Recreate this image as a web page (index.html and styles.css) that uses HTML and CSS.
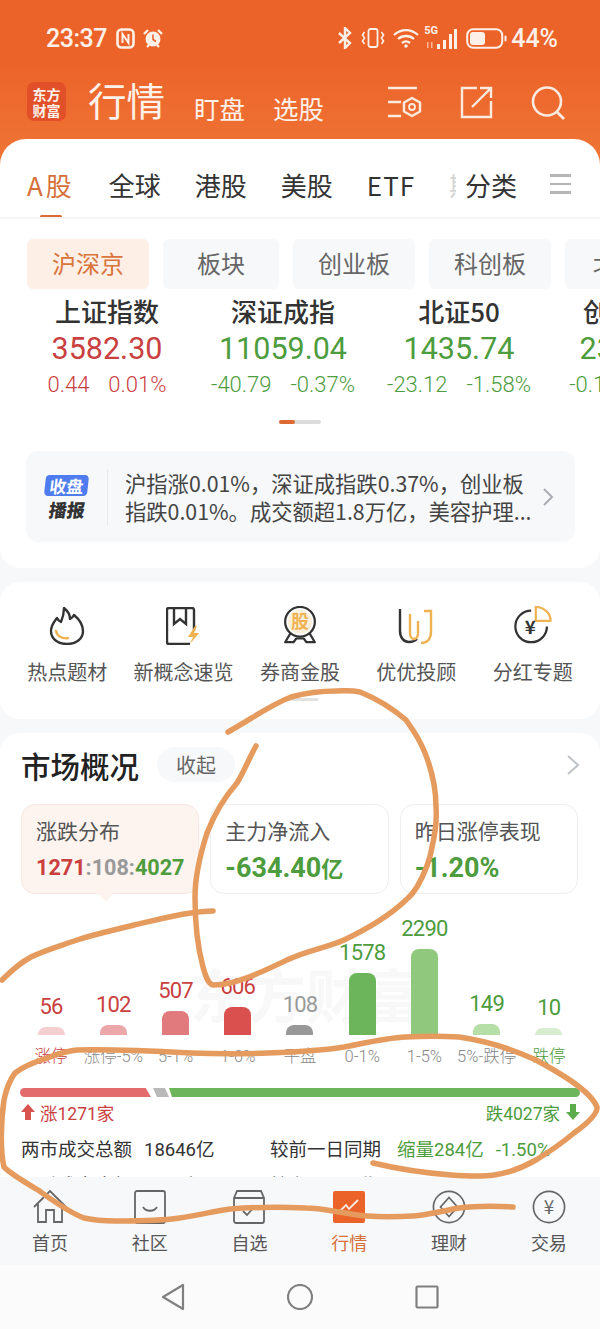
FILE: index.html
```html
<!DOCTYPE html>
<html lang="zh-CN">
<head>
    <meta charset="UTF-8">
    <meta name="viewport" content="width=device-width, initial-scale=1.0">
    <title>行情</title>
    <link rel="stylesheet" href="styles.css">
</head>
<body>
<div class="app">
    <!-- status bar -->
    <div class="status">
        <span class="clock">23:37</span>
        <svg class="st-nfc" width="19" height="21" viewBox="0 0 19 21"><rect x="1.500" y="1.500" width="16" height="18" rx="4" fill="none" stroke="#fdf0e8" stroke-width="2.600"/><path d="M6.500 15V6l6 9V6" fill="none" stroke="#fdf0e8" stroke-width="2"/></svg>
        <svg class="st-alarm" width="20" height="21" viewBox="0 0 20 21"><circle cx="10" cy="11" r="7.500" fill="#fdf0e8"/><path d="M1 6l4-4M19 6l-4-4M4 19l2-2M16 19l-2-2" stroke="#fdf0e8" stroke-width="2.400"/><path d="M10 6.500V11.500l3 2" fill="none" stroke="#ec6329" stroke-width="1.600"/></svg>
        <div class="status-right">
            <svg width="16" height="22" viewBox="0 0 16 22"><path d="M2 6l11 10-5 5V1l5 5L2 16" fill="none" stroke="#fdf0e8" stroke-width="2.400"/></svg>
            <svg class="st-vib" width="24" height="22" viewBox="0 0 24 22"><rect x="7.500" y="2" width="9" height="18" rx="2" fill="none" stroke="#fdf0e8" stroke-width="1.800"/><path d="M3.500 5l-2 3 2 3-2 3 2 3M20.500 5l2 3-2 3 2 3-2 3" fill="none" stroke="#fdf0e8" stroke-width="1.600"/></svg>
            <svg class="st-wifi" width="26" height="20" viewBox="0 0 26 20"><path d="M1 7c7-6.500 17-6.500 24 0M5 11c4.500-4 11.500-4 16 0M9 15c2.500-2 5.500-2 8 0" fill="none" stroke="#fdf0e8" stroke-width="2.300"/><circle cx="13" cy="18" r="1.800" fill="#fdf0e8"/></svg>
            <div class="st-signal">
                <span class="st-5g">5G</span>
                <svg width="33" height="21" viewBox="0 0 33 21"><path d="M13 21v-5h3v5zM19 21V12h3v9zM25 21V6h3v15zM30 21V1h3v20z" fill="#fdf0e8"/><path d="M3 20v-6h1.500v6zM7 20v-6h1.500v6z" fill="#f7b995"/></svg>
            </div>
            <svg class="st-batt" width="41" height="21" viewBox="0 0 41 21"><rect x="1.200" y="1.200" width="35" height="18.600" rx="6" fill="none" stroke="#fdf0e8" stroke-width="2"/><rect x="4" y="4" width="15" height="13" rx="3" fill="#fdf0e8"/><rect x="38.500" y="7.500" width="2" height="6" rx="1" fill="#fdf0e8"/></svg>
            <span class="batt-num">44%</span>
        </div>
    </div>

    <!-- title bar -->
    <div class="topbar">
        <div class="logo"><span>东方</span><span>财富</span></div>
        <span class="title">行情</span>
        <span class="sub sub-a">盯盘</span>
        <span class="sub">选股</span>
        <div class="top-icons">
            <svg width="36" height="32" viewBox="0 0 36 32"><path d="M1 2h29M1 16h13M1 30h13" stroke="#fbeadf" stroke-width="2.400"/><path d="M25 12l8 4.500v9l-8 4.500-8-4.500v-9z" fill="none" stroke="#fbeadf" stroke-width="2.400" stroke-linejoin="round"/><circle cx="25" cy="21" r="3" fill="none" stroke="#fbeadf" stroke-width="1.800"/></svg>
            <svg class="ic-share" width="33" height="33" viewBox="0 0 33 33"><path d="M17 2H2v29h29V15" fill="none" stroke="#fbeadf" stroke-width="2.400"/><path d="M12 21L30 3M20 2h11v10" fill="none" stroke="#fbeadf" stroke-width="2.400"/></svg>
            <svg class="ic-search" width="35" height="34" viewBox="0 0 35 34"><circle cx="16" cy="15.500" r="14" fill="none" stroke="#fbeadf" stroke-width="2.600"/><path d="M26 26l7 7" stroke="#fbeadf" stroke-width="2.800"/></svg>
        </div>
    </div>

    <!-- market card -->
    <div class="card card-main">
        <div class="tabs">
            <div class="tab-scroll">
                <span class="tab tab-on">A股</span>
                <span class="tab">全球</span>
                <span class="tab">港股</span>
                <span class="tab">美股</span>
                <span class="tab tab-etf">ETF</span>
                <span class="tab tab-fade">期指</span>
            </div>
            <span class="tab tab-fixed">分类</span>
            <span class="tab-menu"><i></i><i></i><i></i></span>
        </div>
        <div class="chips">
            <span class="chip chip-on">沪深京</span>
            <span class="chip chip-b">板块</span>
            <span class="chip">创业板</span>
            <span class="chip">科创板</span>
            <span class="chip chip-n">北证50</span>
        </div>
        <div class="indexes">
            <div class="index up">
                <div class="ix-name">上证指数</div>
                <div class="ix-price">3582.30</div>
                <div class="ix-chg"><span>0.44</span><span>0.01%</span></div>
            </div>
            <div class="index down">
                <div class="ix-name">深证成指</div>
                <div class="ix-price">11059.04</div>
                <div class="ix-chg"><span>-40.79</span><span>-0.37%</span></div>
            </div>
            <div class="index down">
                <div class="ix-name">北证50</div>
                <div class="ix-price">1435.74</div>
                <div class="ix-chg"><span>-23.12</span><span>-1.58%</span></div>
            </div>
            <div class="index down">
                <div class="ix-name">创业板指</div>
                <div class="ix-price">2356.16</div>
                <div class="ix-chg"><span>-0.18</span><span>-0.01%</span></div>
            </div>
        </div>
        <div class="pager"><i></i></div>
        <div class="brief">
            <div class="brief-badge">
                <span class="badge-top">收盘</span>
                <span class="badge-bot">播报</span>
            </div>
            <div class="brief-text">
                <div>沪指涨0.01%，深证成指跌0.37%，创业板</div>
                <div>指跌0.01%。成交额超1.8万亿，美容护理...</div>
            </div>
            <svg class="chev" width="12" height="20" viewBox="0 0 12 20"><path d="M2 2l8 8-8 8" fill="none" stroke="#a9adb3" stroke-width="2"/></svg>
        </div>
    </div>

    <!-- shortcuts -->
    <div class="card card-short">
        <div class="shortcuts">
            <div class="short">
                <svg width="36" height="38" viewBox="0 0 36 38"><path d="M15 1c5 4 6 8 6 11 2-1 3-2 4-4 6 5 9 11 9 16 0 8-7 13-16 13S2 32 2 24c0-6 3-9 6-13 1 2 2 3 4 4 2-5 3-9 3-14z" fill="none" stroke="#333" stroke-width="2.400" stroke-linejoin="round"/><path d="M7 24c1 5 6 8 12 7" fill="none" stroke="#eeb251" stroke-width="2.400" stroke-linecap="round"/></svg>
                <span>热点题材</span>
            </div>
            <div class="short">
                <svg width="36" height="38" viewBox="0 0 36 38"><path d="M28 24V3a2 2 0 0 0-2-2H3a2 2 0 0 0-2 2v32a2 2 0 0 0 2 2h21" fill="none" stroke="#333" stroke-width="2.400"/><path d="M8 1v16l6-5 6 5V1" fill="none" stroke="#333" stroke-width="2.400"/><path d="M29 19l-7 11h5l-3 7 9-11h-5l3-7z" fill="#eeb251"/></svg>
                <span>新概念速览</span>
            </div>
            <div class="short">
                <svg width="38" height="42" viewBox="0 0 38 42"><path d="M9 29l-6 10h9l3-4h8l3 4h9l-6-10" fill="none" stroke="#333" stroke-width="2.400" stroke-linejoin="round"/><circle cx="19" cy="17" r="16" fill="#fff" stroke="#333" stroke-width="2.400"/><circle cx="19" cy="17" r="13" fill="#fbeeda"/><text x="19" y="24" text-anchor="middle" class="medal-txt">股</text></svg>
                <span>券商金股</span>
            </div>
            <div class="short">
                <svg width="36" height="38" viewBox="0 0 36 38"><path d="M2 2v22c0 7 4 11 9 11 3 0 6-1 8-3" fill="none" stroke="#333" stroke-width="2.400"/><path d="M12 7v19c0 4 2 6 4 6s4-2 4-6V14" fill="none" stroke="#eeb251" stroke-width="2.400"/><path d="M26 4h7v21c0 7-4 11-10 11" fill="none" stroke="#eeb251" stroke-width="2.400"/></svg>
                <span>优优投顾</span>
            </div>
            <div class="short">
                <svg width="42" height="42" viewBox="0 0 42 42"><path d="M36 22a17 17 0 1 1-17-17" fill="none" stroke="#333" stroke-width="2.400"/><path d="M24 16V1c9 0 16 7 16 15z" fill="#fff" stroke="#eeb251" stroke-width="2.400" stroke-linejoin="round"/><text x="18" y="30" text-anchor="middle" class="yen-txt">¥</text></svg>
                <span>分红专题</span>
            </div>
        </div>
        <div class="short-dot"></div>
    </div>

    <!-- overview -->
    <div class="card card-over">
        <div class="over-head">
            <span class="over-title">市场概况</span>
            <span class="collapse">收起</span>
            <svg class="over-chev" width="14" height="20" viewBox="0 0 14 20"><path d="M2 1l10 9-10 9" fill="none" stroke="#bfc2c6" stroke-width="2"/></svg>
        </div>
        <div class="tiles">
            <div class="tile tile-on">
                <div class="tile-name">涨跌分布</div>
                <div class="tile-ratio"><b class="red">1271</b><b class="gray">:108:</b><b class="green">4027</b></div>
            </div>
            <div class="tile">
                <div class="tile-name">主力净流入</div>
                <div class="tile-val green">-634.40<small>亿</small></div>
            </div>
            <div class="tile">
                <div class="tile-name">昨日涨停表现</div>
                <div class="tile-val green">-1.20%</div>
            </div>
        </div>
        <div class="chart">
            <div class="watermark">东方财富</div>
            <div class="col"><span class="num red">56</span><i class="bar b-r1 h56"></i><em class="red">涨停</em></div>
            <div class="col"><span class="num red">102</span><i class="bar b-r2 h102"></i><em>涨停-5%</em></div>
            <div class="col"><span class="num red">507</span><i class="bar b-r3 h507"></i><em>5-1%</em></div>
            <div class="col"><span class="num red">606</span><i class="bar b-r4 h606"></i><em>1-0%</em></div>
            <div class="col"><span class="num gray">108</span><i class="bar b-g h108"></i><em>平盘</em></div>
            <div class="col"><span class="num green">1578</span><i class="bar b-d4 h1578"></i><em>0-1%</em></div>
            <div class="col"><span class="num green">2290</span><i class="bar b-d3 h2290"></i><em>1-5%</em></div>
            <div class="col"><span class="num green">149</span><i class="bar b-d2 h149"></i><em>5%-跌停</em></div>
            <div class="col"><span class="num green">10</span><i class="bar b-d1 h10"></i><em class="green">跌停</em></div>
        </div>
        <div class="split">
            <i class="sp-up"></i><i class="sp-flat"></i><i class="sp-down"></i>
        </div>
        <div class="split-text">
            <span class="red st-item"><svg width="14" height="16" viewBox="0 0 14 16"><path d="M7 0l7 8h-4v8H4V8H0z" fill="#d9534f"/></svg>涨1271家</span>
            <span class="green st-item">跌4027家<svg class="arrow-d" width="14" height="16" viewBox="0 0 14 16"><path d="M7 16l7-8h-4V0H4v8H0z" fill="#5cab4b"/></svg></span>
        </div>
        <div class="turnover">
            <div class="to-left">两市成交总额<span class="to-val">18646亿</span></div>
            <div class="to-right">较前一日同期<span class="green to-cmp">缩量284亿</span><span class="green to-pct">-1.50%</span></div>
        </div>
        <div class="turnover turnover-next">
            <div class="to-left">两融成交金额<span class="to-val">1920亿</span></div>
            <div class="to-right">较上一日同期</div>
        </div>
    </div>

    <!-- bottom tabs -->
    <div class="nav">
        <div class="nav-item">
            <svg width="34" height="34" viewBox="0 0 34 34"><path d="M1 17L17 1l16 16M5 14v18h8V20h8v12h8V14" fill="none" stroke="#666" stroke-width="1.800"/></svg>
            <span>首页</span>
        </div>
        <div class="nav-item">
            <svg width="32" height="34" viewBox="0 0 32 34"><rect x="1" y="1" width="30" height="32" rx="2" fill="none" stroke="#666" stroke-width="1.800"/><path d="M9 17c3 5 11 5 14 0" fill="none" stroke="#666" stroke-width="1.800"/></svg>
            <span>社区</span>
        </div>
        <div class="nav-item">
            <svg width="32" height="34" viewBox="0 0 32 34"><path d="M1 8l3-7h24l3 7v23a2 2 0 0 1-2 2H3a2 2 0 0 1-2-2zM1 8h30" fill="none" stroke="#666" stroke-width="1.800"/><path d="M10 21l4 4 8-9" fill="none" stroke="#666" stroke-width="1.800"/></svg>
            <span>自选</span>
        </div>
        <div class="nav-item nav-on">
            <svg width="32" height="32" viewBox="0 0 32 32"><rect width="32" height="32" rx="2" fill="#ec6329"/><path d="M7 20l6-6 3 4 9-9" fill="none" stroke="#fbeadf" stroke-width="1.800"/></svg>
            <span>行情</span>
        </div>
        <div class="nav-item">
            <svg width="36" height="36" viewBox="0 0 36 36"><circle cx="18" cy="18" r="16.500" fill="none" stroke="#666" stroke-width="1.800"/><path d="M18 8l9 10-9 10-9-10z" fill="none" stroke="#666" stroke-width="1.800"/></svg>
            <span>理财</span>
        </div>
        <div class="nav-item">
            <svg width="36" height="36" viewBox="0 0 36 36"><circle cx="18" cy="18" r="16.500" fill="none" stroke="#666" stroke-width="1.800"/><text x="18" y="25" text-anchor="middle" class="nav-yen">¥</text></svg>
            <span>交易</span>
        </div>
    </div>

    <!-- android nav -->
    <div class="sysnav">
        <svg width="24" height="28" viewBox="0 0 24 28"><path d="M22 2v24L2 14z" fill="none" stroke="#808080" stroke-width="2.200" stroke-linejoin="round"/></svg>
        <svg width="26" height="26" viewBox="0 0 26 26"><circle cx="13" cy="13" r="12" fill="none" stroke="#808080" stroke-width="2.200"/></svg>
        <svg width="24" height="24" viewBox="0 0 24 24"><rect x="1.500" y="1.500" width="21" height="21" rx="1" fill="none" stroke="#808080" stroke-width="2.200"/></svg>
    </div>

    <!-- hand drawn marks over the screenshot -->
    <svg class="scribble" width="600" height="1329" viewBox="0 0 600 1329">
        <path d="M256 746C248 760 245 770 237 783C222 800 214 815 207 833C200 855 195 875 195 897C195 920 197 945 203 967C206 978 209 985 214 985C235 985 262 972 287 960C308 950 326 948 344 940C365 930 388 917 406 900C412 895 414 892 417 887C425 873 430 860 432 847C436 830 437 820 436 807C436 785 431 768 425 753C420 740 414 731 406 720C392 708 375 698 360 692C350 690 345 691 337 691C320 691 305 693 291 697C270 705 250 720 228 732"/>
        <path d="M213 911C205 911 198 912 191 913C170 916 152 921 134 925C115 930 95 934 77 940C60 946 45 950 31 957C18 964 10 972 2 980"/>
        <path d="M513 1207C495 1206 475 1206 459 1208C442 1211 428 1215 413 1216C395 1217 380 1217 367 1216C355 1215 345 1213 333 1211C322 1209 315 1208 306 1208C280 1207 255 1207 230 1209C210 1212 190 1217 172 1219C152 1221 132 1221 115 1221C103 1221 93 1220 84 1218C68 1212 52 1200 38 1190C25 1182 12 1175 4 1167C0 1150 1 1120 4 1100C6 1090 9 1081 15 1073C25 1065 38 1061 50 1057C60 1053 68 1051 77 1050C115 1049 153 1051 191 1053C217 1054 242 1054 268 1053C295 1052 320 1051 344 1047C365 1043 385 1038 406 1037C424 1036 442 1036 459 1037C487 1041 512 1049 536 1060C558 1072 590 1090 597 1107C598 1114 585 1125 574 1133C562 1143 549 1152 536 1160C522 1168 508 1173 494 1175C480 1177 465 1176 451 1175C425 1173 398 1169 373 1163"/>
    </svg>
</div>
</body>
</html>
```

FILE: styles.css
```css
/* page frame */
* {
    box-sizing: border-box;
}
body {
    margin: 0;
    font-family: "Noto Sans CJK SC", "Noto Sans", sans-serif;
    background: #f7f8fa;
}
i, em {
    font-style: normal;
}
.app {
    position: relative;
    width: 600px;
    height: 1329px;
    overflow: hidden;
    display: flex;
    flex-direction: column;
    background: linear-gradient(#ec6329 0, #ec6329 60px, #ef7636 170px, #f7f8fa 170px);
}
.red { color: #c9403f; }
.green { color: #4d9c3d; }
.gray { color: #999; }

/* status bar */
.status {
    height: 76px;
    padding: 0 42px 0 46px;
    display: flex;
    align-items: center;
    color: #fdf0e8;
}
.clock {
    font-family: Roboto, sans-serif;
    font-weight: 500;
    font-size: 25px;
    letter-spacing: -0.500px;
}
.st-nfc { margin-left: 9px; }
.st-alarm { margin-left: 8px; }
.status-right {
    margin-left: auto;
    display: flex;
    align-items: center;
}
.st-vib { margin-left: 8px; }
.st-wifi { margin-left: 8px; }
.st-signal {
    position: relative;
    margin-left: 5px;
}
.st-signal svg {
    display: block;
}
.st-5g {
    position: absolute;
    left: 0;
    top: -3px;
    font-family: Roboto, sans-serif;
    font-size: 11px;
    font-weight: 700;
    line-height: 12px;
}
.st-batt { margin-left: 9px; }
.batt-num {
    margin-left: 4px;
    font-family: Roboto, sans-serif;
    font-weight: 500;
    font-size: 25px;
}

/* title bar */
.topbar {
    height: 63px;
    padding: 0 34px 0 27px;
    display: flex;
    align-items: flex-start;
    color: #fdf1e9;
}
.logo {
    width: 39px;
    height: 39px;
    margin-top: 6px;
    border-radius: 7px;
    background: #e2502a;
    display: flex;
    flex-direction: column;
    align-items: center;
    justify-content: center;
    font-size: 14px;
    font-weight: 700;
    line-height: 16px;
}
.title {
    margin-left: 22px;
    margin-top: -2px;
    font-size: 38.500px;
    line-height: 50px;
    font-weight: 400;
}
.sub {
    margin: 14px 0 0 28px;
    font-size: 25.500px;
    line-height: 36px;
    font-weight: 400;
}
.sub-a { margin-left: 29px; }
.top-icons {
    margin-left: auto;
    margin-top: 10px;
    display: flex;
    align-items: flex-start;
}
.ic-share { margin-left: 37px; }
.ic-search { margin-left: 38px; }

/* cards */
.card {
    background: #fff;
    flex: none;
}
.card-main {
    height: 429px;
    border-radius: 26px 26px 20px 20px;
}
.card-short {
    height: 137px;
    margin-top: 14px;
    border-radius: 20px;
}
.card-over {
    height: 444px;
    margin-top: 14px;
    border-radius: 20px 20px 0 0;
    overflow: hidden;
}

/* market tabs */
.tabs {
    height: 80px;
    border-bottom: 2px solid #f5f5f5;
    display: flex;
    align-items: flex-start;
    position: relative;
}
.tab {
    position: relative;
    flex: none;
    margin-top: 27px;
    font-size: 26px;
    line-height: 38px;
    color: #333;
    font-weight: 400;
}
.tab-scroll {
    width: 456px;
    height: 78px;
    padding-left: 27px;
    display: flex;
    gap: 34px;
    overflow: hidden;
    flex: none;
}
.tab-on {
    color: #d6703a;
    letter-spacing: 3px;
}
.tab-on::after {
    content: "";
    position: absolute;
    left: 13px;
    top: 49px;
    width: 22px;
    height: 3px;
    border-radius: 2px;
    background: #dd6a33;
}
.tab-etf {
    letter-spacing: 1px;
}
.tab-fade {
    color: #d5d5d5;
    margin-left: 0;
}
.tab-fixed {
    margin-left: 9px;
}
.tab-menu {
    width: 21px;
    margin: 35px 0 0 33px;
    display: flex;
    flex-direction: column;
    gap: 6px;
}
.tab-menu i {
    height: 2.500px;
    background: #b5b5b5;
}

/* sub chips */
.chips {
    padding: 20px 0 0 27px;
    display: flex;
    gap: 14px;
    overflow: hidden;
}
.chip {
    flex: none;
    width: 122px;
    height: 50px;
    border-radius: 6px;
    background: #f7f8fa;
    color: #666;
    font-size: 24px;
    line-height: 48px;
    text-align: center;
    white-space: nowrap;
}
.chip-b { width: 116px; }
.chip-n { width: 130px; }
.chip-on {
    background: #fdeee6;
    color: #d9743a;
}

/* index quotes */
.indexes {
    padding-left: 19px;
    display: flex;
    overflow: hidden;
}
.index {
    flex: none;
    width: 176px;
    text-align: center;
    white-space: nowrap;
}
.ix-name {
    margin: 2px 0 2px;
    font-size: 26px;
    line-height: 40px;
    font-weight: 500;
    color: #333;
}
.ix-price {
    font-family: Roboto, sans-serif;
    font-size: 30.500px;
    line-height: 32px;
}
.ix-chg {
    margin-top: 6px;
    font-family: Roboto, sans-serif;
    font-size: 22px;
    font-weight: 300;
    line-height: 28px;
    display: flex;
    justify-content: center;
    gap: 19px;
}
.up { color: #c9403f; }
.down { color: #4d9c3d; }
.pager {
    position: relative;
    width: 42px;
    height: 4px;
    margin: 21px 0 0 279px;
    border-radius: 2px;
    background: #dcdcdc;
}
.pager i {
    display: block;
    width: 16px;
    height: 4px;
    border-radius: 2px;
    background: #dd6a33;
}

/* closing brief */
.brief {
    width: 549px;
    height: 91px;
    margin: 27px 0 0 26px;
    padding-left: 19px;
    border-radius: 12px;
    background: #f7f8fa;
    display: flex;
    align-items: center;
}
.brief-badge {
    width: 43px;
    display: flex;
    flex-direction: column;
    align-items: center;
}
.badge-top {
    width: 43px;
    height: 21px;
    border-radius: 4px;
    background: #4f7df0;
    color: #fff;
    font-size: 17px;
    font-weight: 700;
    line-height: 21px;
    text-align: center;
    transform: skewX(-6deg);
}
.badge-bot {
    margin-top: 3px;
    font-size: 18px;
    font-weight: 900;
    line-height: 20px;
    color: #333;
    transform: skewX(-8deg);
}
.brief-text {
    margin-left: 19px;
    padding-left: 17px;
    border-left: 1px solid #e9e9ec;
    font-size: 21.300px;
    line-height: 28px;
    color: #444;
    white-space: nowrap;
}
.chev {
    margin-left: auto;
    margin-right: 21px;
}

/* shortcuts */
.shortcuts {
    padding: 24px 9px 0;
    display: grid;
    grid-template-columns: repeat(5, 116.400px);
}
.short {
    height: 80px;
    display: flex;
    flex-direction: column;
    align-items: center;
    justify-content: flex-end;
    font-size: 20px;
    line-height: 28px;
    color: #555;
    white-space: nowrap;
}
.short svg {
    display: block;
    margin-bottom: 13px;
}
.medal-txt {
    font-size: 19px;
    font-weight: 700;
    fill: #eeb251;
}
.yen-txt {
    font-size: 20px;
    font-weight: 700;
    fill: #333;
}
.short-dot {
    width: 36px;
    height: 3px;
    margin: 12px 0 0 282px;
    background: #e2e2e2;
}

/* overview */
.over-head {
    height: 71px;
    padding: 14px 20px 0 21px;
    display: flex;
    align-items: flex-start;
}
.over-title {
    font-size: 29.500px;
    line-height: 36px;
    font-weight: 500;
    color: #222;
}
.collapse {
    width: 78px;
    height: 35px;
    margin-left: 18px;
    border-radius: 18px;
    background: #f7f8fa;
    color: #666;
    font-size: 20px;
    line-height: 35px;
    text-align: center;
}
.over-chev {
    margin: 8px 0 0 auto;
}
.tiles {
    padding: 0 22px 0 21px;
    display: grid;
    grid-template-columns: repeat(3, 1fr);
    gap: 11px;
}
.tile {
    position: relative;
    height: 90px;
    padding: 10px 0 0 14px;
    border: 1px solid #eeeeee;
    border-radius: 14px;
    white-space: nowrap;
}
.tile-on {
    background: #fdf3ef;
    border-color: #f7e7e0;
}
.tile-on::after {
    content: "";
    position: absolute;
    left: 78px;
    bottom: -6px;
    width: 12px;
    height: 12px;
    background: #fdf3ef;
    transform: rotate(45deg);
}
.tile-name {
    font-size: 21px;
    line-height: 30px;
    color: #555;
}
.tile-ratio {
    margin-top: 8px;
    font-family: Roboto, sans-serif;
    font-size: 21.600px;
    line-height: 30px;
}
.tile-val {
    margin-top: 6px;
    font-family: Roboto, "Noto Sans CJK SC", sans-serif;
    font-size: 27px;
    line-height: 34px;
    font-weight: 700;
}
.tile-val small {
    font-size: 22px;
}

/* distribution chart */
.chart {
    position: relative;
    height: 173px;
    padding: 0 20px;
    display: grid;
    grid-template-columns: repeat(9, 1fr);
    align-items: end;
}
.watermark {
    position: absolute;
    left: 190px;
    top: 64px;
    font-size: 58px;
    line-height: 70px;
    font-weight: 700;
    color: #f8f8f8;
    white-space: nowrap;
}
.col {
    position: relative;
    display: flex;
    flex-direction: column;
    align-items: center;
    white-space: nowrap;
}
.num {
    font-family: Roboto, sans-serif;
    font-size: 22px;
    font-weight: 400;
    letter-spacing: -0.800px;
    line-height: 26px;
    margin-bottom: 7px;
}
.bar {
    width: 27px;
    border-radius: 8px 8px 0 0;
}
.col em {
    height: 32px;
    padding-top: 8px;
    font-family: Roboto, "Noto Sans CJK SC", sans-serif;
    font-size: 16.500px;
    line-height: 28px;
    font-weight: 300;
    color: #888;
}
.col em.red { color: #c9403f; }
.col em.green { color: #4d9c3d; }
.h56 { height: 8px; }
.h102 { height: 10px; }
.h507 { height: 24px; }
.h606 { height: 28px; }
.h108 { height: 10px; }
.h1578 { height: 62px; }
.h2290 { height: 86px; }
.h149 { height: 11px; }
.h10 { height: 7px; }
.b-r1 { background: #f4cfd0; }
.b-r2 { background: #eca7aa; }
.b-r3 { background: #e07a7c; }
.b-r4 { background: #d9504f; }
.b-g { background: #989898; }
.b-d4 { background: #6cb55a; }
.b-d3 { background: #90c97e; }
.b-d2 { background: #b6dea7; }
.b-d1 { background: #d8eccf; }

/* up / down split bar */
.split {
    height: 9px;
    margin: 21px 20px 0;
    display: flex;
    gap: 0;
}
.split i {
    display: block;
    height: 9px;
}
.sp-up {
    width: 131px;
    background: #e36b6b;
    border-radius: 5px 0 0 5px;
    clip-path: polygon(0 0, 96% 0, 100% 100%, 0 100%);
}
.sp-flat {
    width: 16px;
    margin-left: 2px;
    background: #b9b9b9;
    clip-path: polygon(0 0, 75% 0, 100% 100%, 25% 100%);
}
.sp-down {
    flex: 1;
    background: #6cb55a;
    border-radius: 0 5px 5px 0;
    clip-path: polygon(0 0, 100% 0, 100% 100%, 3px 100%);
}
.split-text {
    height: 30px;
    margin-top: 0;
    padding: 0 20px 0 21px;
    display: flex;
    justify-content: space-between;
    align-items: center;
    font-family: Roboto, "Noto Sans CJK SC", sans-serif;
    font-size: 17.500px;
}
.st-item {
    display: flex;
    align-items: center;
}
.st-item svg {
    margin-right: 5px;
}
.st-item .arrow-d {
    margin: 0 0 0 6px;
}
.turnover {
    height: 36px;
    margin-top: 5px;
    padding: 0 0 0 21px;
    display: flex;
    font-family: Roboto, "Noto Sans CJK SC", sans-serif;
    font-size: 18.500px;
    line-height: 36px;
    color: #333;
    white-space: nowrap;
}
.turnover-next {
    margin-top: 0;
}
.to-left {
    width: 249px;
    flex: none;
}
.to-val {
    margin-left: 12px;
}
.to-cmp {
    margin-left: 16px;
}
.to-pct {
    margin-left: 12px;
}

/* bottom nav */
.nav {
    height: 88px;
    flex: none;
    background: #f7f8fa;
    display: grid;
    grid-template-columns: repeat(6, 99.800px);
}
.nav-item {
    padding-top: 13px;
    display: flex;
    flex-direction: column;
    align-items: center;
    font-size: 18px;
    line-height: 26px;
    color: #555;
}
.nav-item svg {
    height: 34px;
    margin-bottom: 5px;
}
.nav-on {
    color: #d6703a;
}
.nav-yen {
    font-size: 20px;
    fill: #666;
}
.sysnav {
    height: 64px;
    flex: none;
    background: #fbfbfc;
    display: flex;
    align-items: center;
    justify-content: center;
    gap: 102px;
}

/* pen marks */
.scribble {
    position: absolute;
    left: 0;
    top: 0;
    pointer-events: none;
}
.scribble path {
    fill: none;
    stroke: #e59a5e;
    stroke-width: 5.500;
    stroke-linecap: round;
    stroke-linejoin: round;
}
```
